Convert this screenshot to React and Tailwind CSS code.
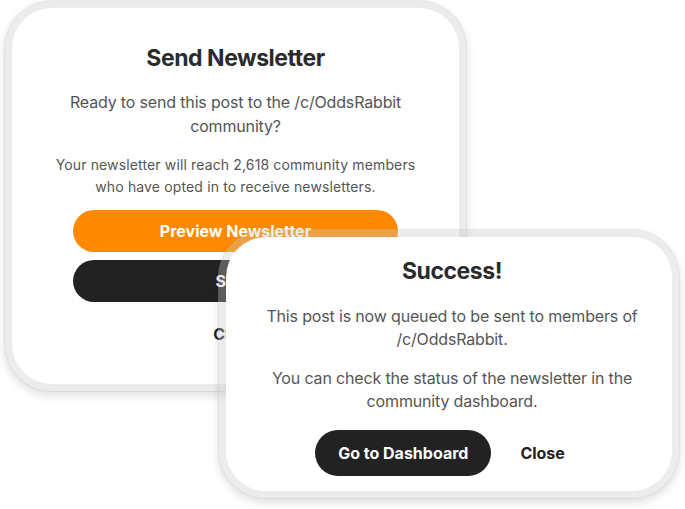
import React from "react";

const font = { fontFamily: "Inter, 'Noto Sans', sans-serif" };

const SendCard = () => (
    <div className="absolute left-[4px] top-0 w-[463px] h-[392px] rounded-[48px] border-[8px] border-[rgba(200,200,200,0.35)] bg-white shadow-[0_4px_8px_rgba(0,0,0,0.12)] bg-clip-padding">
        <div className="flex flex-col items-center px-10 pt-[34px] text-center">
            <h2 className="text-[23px] leading-8 font-bold tracking-[-0.02em] text-[#2b2b2b]">Send Newsletter</h2>
            <p className="mt-4 text-[16px] leading-6 tracking-[-0.01em] text-[#555]">
                Ready to send this post to the /c/OddsRabbit community?
            </p>
            <p className="mt-[16px] text-[14px] leading-[22px] tracking-[0.01em] text-[#555]">
                Your newsletter will reach 2,618 community members who have opted in to receive newsletters.
            </p>
            <div className="mt-[12px] flex w-[325px] flex-col gap-2">
                <button className="h-[42px] rounded-full bg-[#ff8a00] text-[16px] font-bold text-white">
                    Preview Newsletter
                </button>
                <button className="h-[42px] rounded-full bg-[#222] text-[16px] font-bold text-white">
                    Send
                </button>
                <button className="mt-[3px] h-[42px] text-[16px] font-bold text-[#222]">Close</button>
            </div>
        </div>
    </div>
);

const SuccessCard = () => (
    <div className="absolute left-[218px] top-[229px] w-[462px] h-[270px] rounded-[48px] border-[8px] border-[rgba(200,200,200,0.35)] bg-white shadow-[0_4px_8px_rgba(0,0,0,0.12)] bg-clip-padding">
        <div className="flex flex-col items-center px-6 pt-[18px] text-center">
            <div className="flex flex-col items-center pl-[6px]">
                <h2 className="text-[23px] leading-8 font-bold tracking-[-0.02em] text-[#2b2b2b]">Success!</h2>
                <p className="mt-[18px] text-[16px] leading-[23px] tracking-[-0.01em] text-[#555]">
                    This post is now queued to be sent to members of /c/OddsRabbit.
                </p>
                <p className="mt-[16px] text-[16px] leading-[23px] tracking-[-0.01em] text-[#555]">
                    You can check the status of the newsletter in the community dashboard.
                </p>
            </div>
            <div className="mt-[17px] flex items-center gap-[9px] pl-[2px]">
                <button className="h-[46px] rounded-full bg-[#222] px-[23px] text-[16px] font-bold text-white">
                    Go to Dashboard
                </button>
                <button className="h-[46px] px-5 text-[16px] font-bold text-[#222]">Close</button>
            </div>
        </div>
    </div>
);

const App = () => {
    return (
        <div className="relative h-[509px] w-[685px] overflow-hidden bg-white" style={font}>
            <SendCard />
            <SuccessCard />
        </div>
    );
};

export default App;
